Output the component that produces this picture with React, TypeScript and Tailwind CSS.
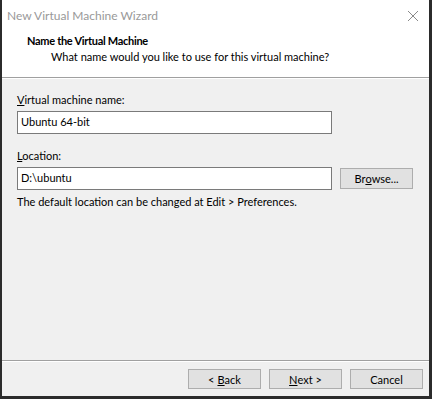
import React from "react";

const font = { fontFamily: 'Lato, "Segoe UI", sans-serif' };

const WizButton = ({ children }: { children: React.ReactNode }) => (
  <button className="w-[73px] h-[20px] border border-[#adadad] bg-[#e1e1e1] text-[11px] text-black leading-none flex items-center justify-center">
    {children}
  </button>
);

const App: React.FC = () => {
  return (
    <div
      className="w-[432px] h-[399px] bg-[#2b2b2b] pl-[2px] pr-[3px] pb-[3px] text-[11px] text-black"
      style={font}
    >
      <div className="w-full h-full flex flex-col bg-[#f0f0f0]">
        <section className="h-[31px] bg-white flex items-center justify-between pl-[5px] pr-[9px]">
          <span className="text-[12px] text-[#999999]">New Virtual Machine Wizard</span>
          <svg width="12" height="12" viewBox="0 0 12 12" className="mr-[1px]">
            <path d="M1 1 L11 11 M11 1 L1 11" stroke="#8a8a8a" strokeWidth="1" />
          </svg>
        </section>

        <section className="h-[46px] bg-white pl-[25px] pt-[1px] flex flex-col">
          <h1 className="font-bold leading-[16px] pt-[1px] tracking-[-0.3px]">
            Name the Virtual Machine
          </h1>
          <p className="pl-[24px] leading-[16px]">
            What name would you like to use for this virtual machine?
          </p>
        </section>
        <div className="h-px bg-[#a0a0a0]" />
        <div className="h-px bg-white" />

        <section className="flex-1 flex flex-col pl-[15px] pt-[13px]">
          <label className="leading-[16px]">
            <span className="underline">V</span>irtual machine name:
          </label>
          <div className="mt-[3px] w-[315px] h-[23px] border border-[#7a7a7a] bg-white flex items-center pl-[3px]">
            Ubuntu 64-bit
          </div>

          <label className="leading-[16px] mt-[14px]">
            <span className="underline">L</span>ocation:
          </label>
          <div className="mt-[3px] flex items-center gap-[8px]">
            <div className="w-[315px] h-[23px] border border-[#7a7a7a] bg-white flex items-center pl-[3px]">
              D:\ubuntu
            </div>
            <button className="w-[73px] h-[21px] border border-[#adadad] bg-[#e1e1e1] flex items-center justify-center leading-none">
              Br<span className="underline">o</span>wse...
            </button>
          </div>
          <p className="leading-[16px] mt-[4px]">
            The default location can be changed at Edit &gt; Preferences.
          </p>
        </section>

        <div className="h-px bg-[#a0a0a0] mx-0" />
        <div className="h-px bg-white" />
        <section className="h-[34px] flex items-start justify-end gap-[8px] pr-[6px] pt-[7px]">
          <WizButton>
            &lt; <span className="underline ml-[3px]">B</span>ack
          </WizButton>
          <WizButton>
            <span className="underline">N</span>ext &gt;
          </WizButton>
          <WizButton>Cancel</WizButton>
        </section>
      </div>
    </div>
  );
};

export default App;
